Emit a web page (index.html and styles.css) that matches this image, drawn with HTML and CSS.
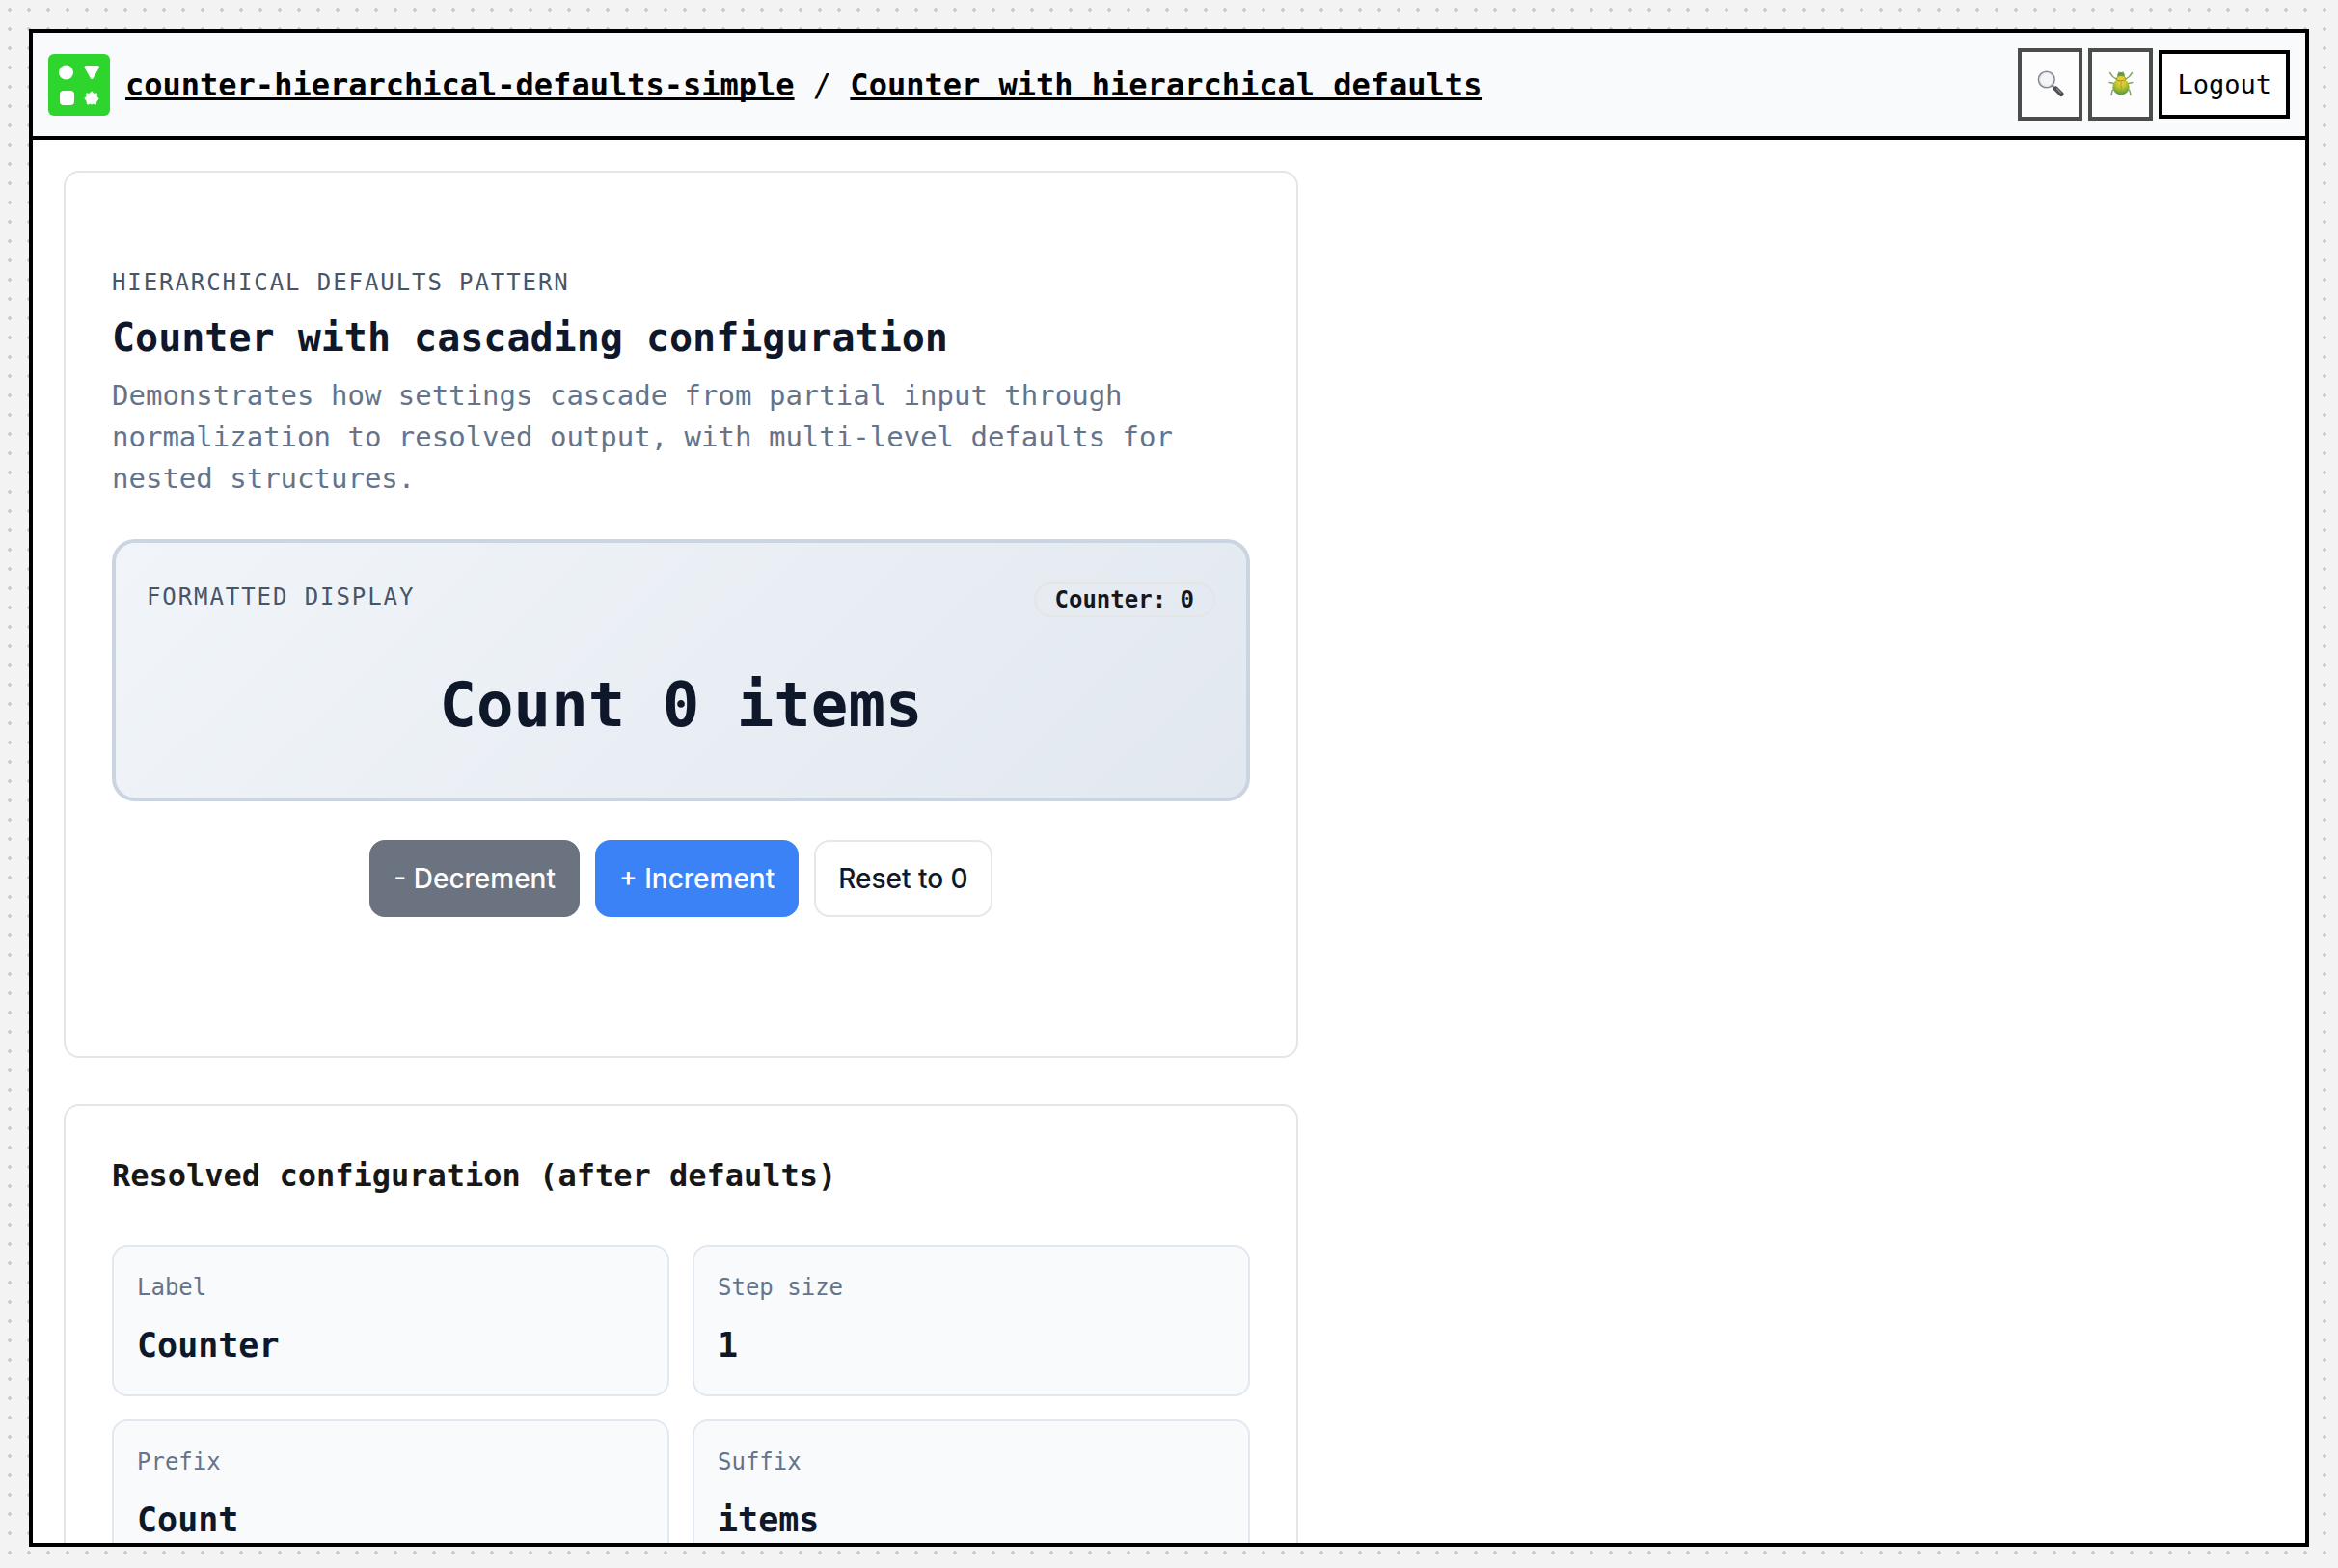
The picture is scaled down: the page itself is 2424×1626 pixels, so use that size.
FILE: index.html
```html
<!DOCTYPE html>
<html lang="en">
<head>
<meta charset="utf-8">
<meta name="viewport" content="width=device-width, initial-scale=1">
<title>Counter with hierarchical defaults</title>
<link rel="stylesheet" href="styles.css">
</head>
<body>
<div class="frame">
  <header class="topbar">
    <a class="logo" href="#" aria-label="Home">
      <svg viewBox="0 0 64 64" width="64" height="64" aria-hidden="true">
        <rect width="64" height="64" rx="6" fill="#2dd52d"/>
        <g fill="#fff" stroke="#fff" stroke-linejoin="round">
          <circle cx="18.500" cy="19" r="7.500" stroke="none"/>
          <path d="M39 13.500 H51.500 L45.250 24.500 Z" stroke-width="3"/>
          <rect x="12" y="38" width="15" height="15" rx="4" stroke="none"/>
          <path d="M45 39.500 L47 42 L50 41.500 L49.700 44.500 L51.500 46.500 L49.500 48.500 L49 51.500 L46.500 50.500 L45 51.500 L43.500 50.500 L41 51.500 L40.500 48.500 L38.500 46 L40.500 44.500 L40.200 41.500 L43 42 Z" stroke-width="2"/>
        </g>
      </svg>
    </a>
    <nav class="crumbs" aria-label="Breadcrumb">
      <a href="#">counter-hierarchical-defaults-simple</a>
      <span>/</span>
      <a href="#">Counter with hierarchical defaults</a>
    </nav>
    <div class="actions">
      <button class="tool" type="button" aria-label="Search">
        <svg viewBox="0 0 28 28" width="28" height="28" aria-hidden="true">
          <path d="M15.500 15.500 L19 19" stroke="#8b8f93" stroke-width="2.500"/>
          <path d="M19.500 19 L25 24.500" stroke="#4a4d51" stroke-width="5" stroke-linecap="round"/>
          <path d="M20 18.500 L25 23.500" stroke="#85898d" stroke-width="1.200"/>
          <circle cx="9.800" cy="9.500" r="8.300" fill="#f4f5f6" stroke="#85898e" stroke-width="1.600"/>
          <circle cx="9.800" cy="9.500" r="7" fill="none" stroke="#d9dde1" stroke-width="1"/>
        </svg>
      </button>
      <button class="tool" type="button" aria-label="Debug">
        <svg viewBox="0 0 28 28" width="28" height="28" aria-hidden="true">
          <defs>
            <radialGradient id="shell" cx="50%" cy="25%" r="72%">
              <stop offset="0" stop-color="#f0d53c"/>
              <stop offset="0.450" stop-color="#c0c22f"/>
              <stop offset="1" stop-color="#4f9c3f"/>
            </radialGradient>
          </defs>
          <g fill="none" stroke="#7fa565" stroke-width="1.400" stroke-linecap="round" stroke-linejoin="round">
            <path d="M9 9 L5.500 6.500 L2.500 2.500 M19 9 L22.500 6.500 L25.500 2.500"/>
            <path d="M6.500 13.500 L2 12.500 M21.500 13.500 L26 12.500"/>
            <path d="M7 19 L5 21 L4 25.500 M21 19 L23 21 L24 25.500"/>
            <path d="M12.500 3 L12 2 M15.500 3 L16 2"/>
          </g>
          <ellipse cx="14" cy="5" rx="3.800" ry="3" fill="#5f9c3e"/>
          <ellipse cx="14" cy="17.200" rx="8.600" ry="8.300" fill="url(#shell)"/>
          <path d="M9 9.800 Q9.500 5.500 14 5.500 Q18.500 5.500 19 9.800 Q14 12 9 9.800 Z" fill="#e8cb35" stroke="#7a9a3a" stroke-width="0.900"/>
          <path d="M14 11 V25" stroke="#98992a" stroke-width="0.800"/>
        </svg>
      </button>
      <button class="logout" type="button">Logout</button>
    </div>
  </header>

  <main class="content">
    <section class="card card-demo">
      <header class="intro">
        <p class="eyebrow">Hierarchical defaults pattern</p>
        <h1>Counter with cascading configuration</h1>
        <p class="lead">Demonstrates how settings cascade from partial input through normalization to resolved output, with multi-level defaults for nested structures.</p>
      </header>
      <div class="display">
        <div class="display-head">
          <p class="eyebrow">Formatted display</p>
          <span class="pill">Counter: 0</span>
        </div>
        <output class="value">Count 0 items</output>
      </div>
      <div class="controls">
        <button class="btn btn-muted" type="button">- Decrement</button>
        <button class="btn btn-primary" type="button">+ Increment</button>
        <button class="btn btn-outline" type="button">Reset to 0</button>
      </div>
    </section>

    <section class="card">
      <h2>Resolved configuration (after defaults)</h2>
      <dl class="settings">
        <div class="setting"><dt>Label</dt><dd>Counter</dd></div>
        <div class="setting"><dt>Step size</dt><dd>1</dd></div>
        <div class="setting"><dt>Prefix</dt><dd>Count</dd></div>
        <div class="setting"><dt>Suffix</dt><dd>items</dd></div>
      </dl>
    </section>
  </main>
</div>
</body>
</html>
```
FILE: styles.css
```css
* {
  box-sizing: border-box;
}

body {
  margin: 0;
  height: 100vh;
  padding: 30px 30px 22px;
  background: #f3f3f3 radial-gradient(circle, #cccccc 2px, transparent 2px) 0 0 / 20px 20px;
  color: #000;
  font-family: "DejaVu Sans Mono", "Liberation Mono", monospace;
}

h1, h2, p, dl, dd {
  margin: 0;
}

.frame {
  display: flex;
  flex-direction: column;
  height: 100%;
  border: 4px solid #000;
  background: #fff;
}

.topbar {
  display: flex;
  align-items: center;
  gap: 16px;
  padding: 16px;
  border-bottom: 4px solid #000;
  background: #f8fafc;
}

.logo svg,
.tool svg {
  display: block;
}

.crumbs {
  flex: 1;
  font-size: 32px;
  line-height: 48px;
}

.crumbs a {
  color: #000;
  font-weight: 700;
  text-decoration: underline;
  text-decoration-thickness: 3px;
  text-decoration-skip-ink: none;
}

.actions {
  display: flex;
  align-items: center;
  gap: 6px;
}

.actions button {
  border: 4px solid #000;
  background: #fff;
  color: #000;
  font: inherit;
  font-size: 27px;
}

.actions .tool {
  display: grid;
  place-items: center;
  width: 67px;
  height: 75px;
  padding: 0 0 2px;
  border-color: #4b4c4c;
  background: #fdfdfe;
}

.actions .logout {
  height: 71px;
  padding: 0 15px;
}

.content {
  display: flex;
  flex: 1;
  flex-direction: column;
  gap: 48px;
  min-height: 0;
  padding: 32px;
  overflow: hidden;
}

.card {
  flex: none;
  width: 100%;
  max-width: 1280px;
  padding: 48px;
  border: 2px solid #e5e5e5;
  border-radius: 16px;
  background: #fff;
}

.card-demo {
  padding: 96px 48px 144px;
}

.intro {
  display: grid;
  gap: 8px;
}

.eyebrow {
  color: #475569;
  font-size: 24px;
  line-height: 36px;
  letter-spacing: 0.08em;
  text-transform: uppercase;
}

h1 {
  color: #0f172a;
  font-size: 40px;
  line-height: 62px;
}

.lead {
  color: #64748b;
  font-size: 29px;
  line-height: 43px;
}

.display {
  margin-top: 41px;
  padding: 38px 32px 48px;
  border: 4px solid #cbd5e1;
  border-radius: 24px;
  background: linear-gradient(135deg, #f1f5f9, #e2e8f0);
}

.display-head {
  display: flex;
  align-items: flex-start;
  justify-content: space-between;
}

.pill {
  margin-top: 3px;
  padding: 0 20px;
  border: 2px solid #e5e5e5;
  border-radius: 18px;
  color: #171717;
  font-size: 24px;
  font-weight: 700;
  line-height: 32px;
}

.value {
  display: block;
  margin-top: 43px;
  color: #0f172a;
  font-size: 64px;
  font-weight: 700;
  line-height: 96px;
  text-align: center;
}

.controls {
  display: flex;
  flex-wrap: wrap;
  justify-content: center;
  gap: 16px;
  margin-top: 40px;
}

.btn {
  height: 80px;
  padding: 0 23px;
  border: 2px solid transparent;
  border-radius: 16px;
  font-family: Inter, "Liberation Sans", sans-serif;
  font-size: 28px;
  font-weight: 500;
}

.btn-muted {
  border-color: #6b7280;
  background: #6b7280;
  color: #fff;
}

.btn-primary {
  border-color: #3b82f6;
  background: #3b82f6;
  color: #fff;
}

.btn-outline {
  border-color: #e5e7eb;
  background: #fff;
  color: #111827;
}

h2 {
  color: #171717;
  font-size: 32px;
  line-height: 48px;
}

.settings {
  display: grid;
  grid-template-columns: repeat(2, 1fr);
  gap: 24px;
  margin-top: 48px;
}

.setting {
  display: grid;
  gap: 16px;
  padding: 24px;
  border: 2px solid #e2e8f0;
  border-radius: 16px;
  background: #f8fafc;
}

.setting dt {
  color: #64748b;
  font-size: 24px;
  line-height: 36px;
}

.setting dd {
  color: #0f172a;
  font-size: 35px;
  font-weight: 700;
  line-height: 53px;
}
```
